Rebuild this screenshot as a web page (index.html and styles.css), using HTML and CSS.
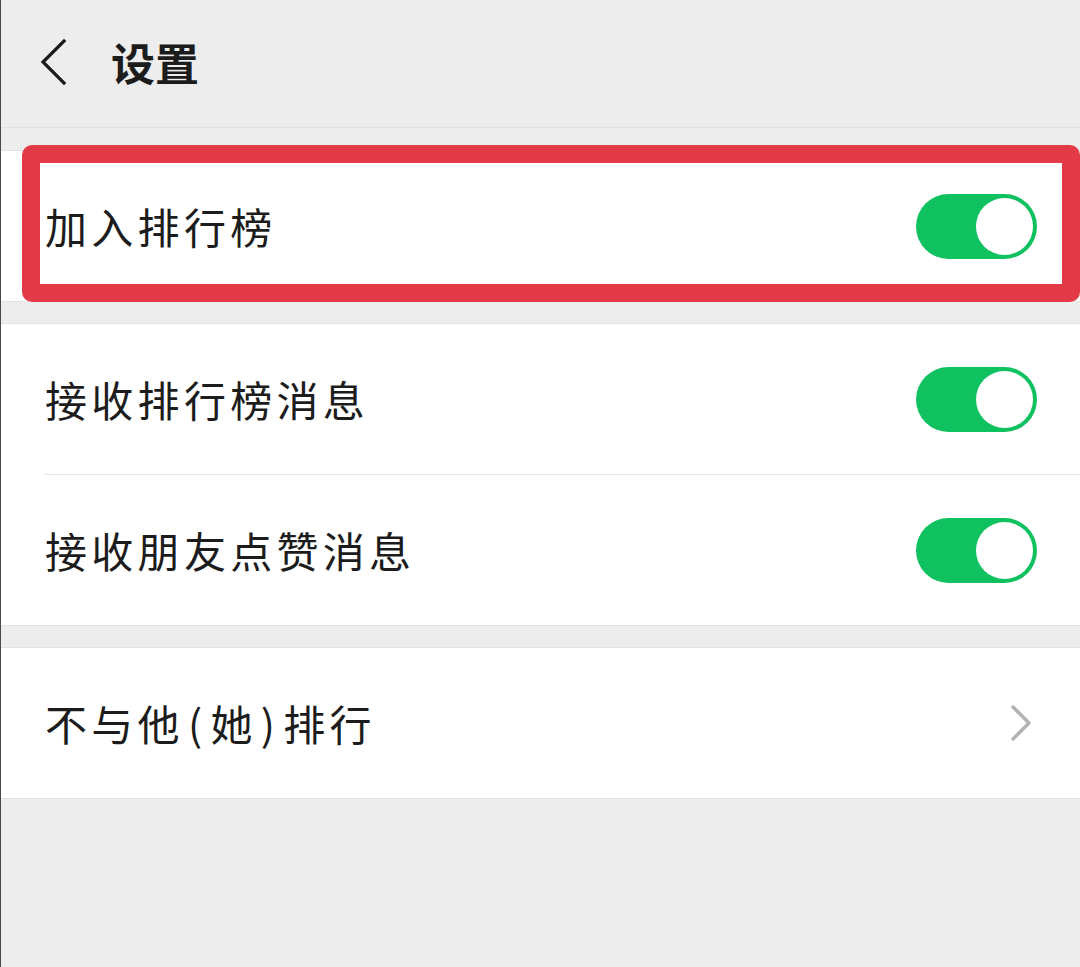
FILE: index.html
```html
<!DOCTYPE html>
<html lang="zh-CN">
<head>
<meta charset="utf-8">
<title>设置</title>
<link rel="stylesheet" href="styles.css">
</head>
<body>
<div class="app">
  <header class="topbar">
    <svg class="back" width="30" height="50" viewBox="0 0 30 50"><polyline points="25,4 4,25 25,46" fill="none" stroke="#1a1a1a" stroke-width="3.2" stroke-linecap="square" stroke-linejoin="miter"/></svg>
    <h1 class="title">设置</h1>
  </header>

  <section class="group first">
    <div class="row">
      <span class="label">加入排行榜</span>
      <span class="switch on"><span class="knob"></span></span>
    </div>
    <div class="highlight"></div>
  </section>

  <section class="group">
    <div class="row">
      <span class="label">接收排行榜消息</span>
      <span class="switch on"><span class="knob"></span></span>
    </div>
    <div class="row divided">
      <span class="label">接收朋友点赞消息</span>
      <span class="switch on"><span class="knob"></span></span>
    </div>
  </section>

  <section class="group">
    <div class="row">
      <span class="label">不与他<span class="paren">(</span>她<span class="paren">)</span>排行</span>
      <svg class="chev" width="26" height="38" viewBox="0 0 26 38"><polyline points="4,3 20,19 4,35" fill="none" stroke="#b2b2b2" stroke-width="3.4" stroke-linecap="round" stroke-linejoin="round"/></svg>
    </div>
  </section>
</div>
</body>
</html>
```

FILE: styles.css
```css
* { box-sizing: border-box; }
html, body { margin: 0; padding: 0; }
body {
  background: #ededed;
  font-family: "Noto Sans CJK SC", "Noto Sans", sans-serif;
  color: #1c1c1c;
}
.app {
  width: 1080px;
  min-height: 967px;
  border-left: 1px solid #4a4a4a;
  background: #ededed;
}
.topbar {
  height: 128px;
  display: flex;
  align-items: center;
  border-bottom: 1px solid #e0e0e0;
  padding-left: 38px;
}
.back { display: block; margin-top: -4px; }
.title {
  margin: -4px 0 0 42px;
  font-size: 44px;
  font-weight: 700;
  line-height: 1;
  letter-spacing: 0;
}
.group {
  position: relative;
  background: #fff;
  border-top: 1px solid #e2e2e2;
  border-bottom: 1px solid #e2e2e2;
  margin-top: 21px;
}
.group.first { margin-top: 22px; }
.row {
  height: 150px;
  display: flex;
  align-items: center;
  justify-content: space-between;
  padding: 0 43px 0 44px;
  position: relative;
}
.row.divided::before {
  content: "";
  position: absolute;
  left: 44px;
  right: 0;
  top: -1px;
  border-top: 1px solid #e6e6e6;
}
.row.divided { margin-top: 1px; }
.label {
  font-size: 42px;
  letter-spacing: 4.3px;
  line-height: 1;
}
.paren { padding: 0 4px; }
.switch {
  width: 121px;
  height: 65px;
  border-radius: 33px;
  background: #10c25f;
  position: relative;
  display: block;
  flex: none;
}
.knob {
  position: absolute;
  right: 4px;
  top: 4px;
  width: 57px;
  height: 57px;
  border-radius: 50%;
  background: #fff;
}
.chev { display: block; margin-right: 2px; }
.highlight {
  position: absolute;
  left: 21px;
  right: 0;
  top: -6px;
  bottom: -1px;
  border: 18px solid #e23a46;
  border-radius: 10px;
  pointer-events: none;
}
```
